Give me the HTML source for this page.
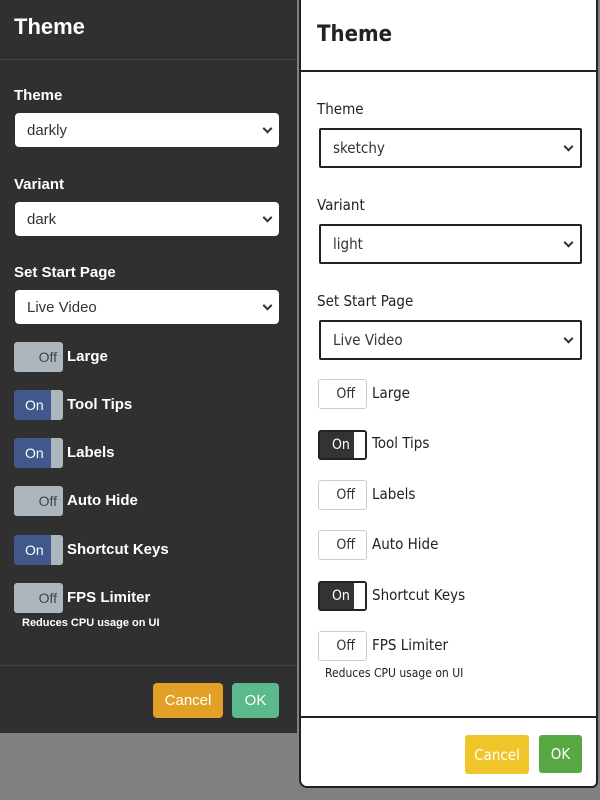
<!DOCTYPE html>
<html><head><style>
*{box-sizing:border-box;margin:0;padding:0}
body{width:600px;height:800px;background:#808080;position:relative;overflow:hidden;font-family:"Liberation Sans",sans-serif}
.a{position:absolute}
#L{left:0;top:0;width:297px;height:733px;background:#303030;color:#fff}
#R{left:299px;top:-2px;width:299px;height:790px;background:#fff;border:2px solid #222;border-radius:0 0 6px 8px;color:#222;font-family:"Liberation Sans Narrow","DejaVu Sans Condensed",sans-serif}
.lbl{font-size:15px;font-weight:bold}
.sel{border-radius:4px;background:#fff;color:#333;font-size:15px;padding-left:12px;display:flex;align-items:center}
.chev{position:absolute;right:8px;top:50%;width:7px;height:7px;border-right:2px solid #333;border-bottom:2px solid #333;transform:translateY(-70%) rotate(45deg)}
.tg{width:49px;height:30px;border-radius:3px;font-size:14px;display:flex;align-items:center}
.off{background:#adb5bd;color:#444;justify-content:flex-end;padding-right:6px}
.on{background:#41598a;color:#fff;padding-left:11px}
.on::after{content:"";position:absolute;right:0;top:0;width:12px;height:30px;background:#adb5bd;border-radius:0 3px 3px 0}
.rtg{width:49px;height:30px;border:1px solid #ccc;border-radius:3px;font-size:14px;display:flex;align-items:center}
.roff{justify-content:flex-end;padding-right:11px;color:#333}
.ron{background:#333;color:#fff;padding-left:12px;border:2px solid #222}
.ron::after{content:"";position:absolute;right:0;top:0;width:11px;height:26px;background:#fff}
.rl{font-size:15px}
</style></head><body>
<div id="L" class="a">
<div class="a" style="left:14px;top:14px;font-size:22px;font-weight:bold">Theme</div>
<div class="a" style="left:0;top:59px;width:297px;height:1px;background:#444"></div>
<div class="a lbl" style="left:14px;top:87px">Theme</div>
<div class="a sel" style="left:15px;top:113px;width:264px;height:34px">darkly<span class="chev"></span></div>
<div class="a lbl" style="left:14px;top:176px">Variant</div>
<div class="a sel" style="left:15px;top:202px;width:264px;height:34px">dark<span class="chev"></span></div>
<div class="a lbl" style="left:14px;top:264px">Set Start Page</div>
<div class="a sel" style="left:15px;top:290px;width:264px;height:34px">Live Video<span class="chev"></span></div>
<div class="a tg off" style="left:14px;top:342px">Off</div><div class="a lbl" style="left:67px;top:348px">Large</div>
<div class="a tg on" style="left:14px;top:390px">On</div><div class="a lbl" style="left:67px;top:396px">Tool Tips</div>
<div class="a tg on" style="left:14px;top:438px">On</div><div class="a lbl" style="left:67px;top:444px">Labels</div>
<div class="a tg off" style="left:14px;top:486px">Off</div><div class="a lbl" style="left:67px;top:492px">Auto Hide</div>
<div class="a tg on" style="left:14px;top:535px">On</div><div class="a lbl" style="left:67px;top:541px">Shortcut Keys</div>
<div class="a tg off" style="left:14px;top:583px">Off</div><div class="a lbl" style="left:67px;top:589px">FPS Limiter</div>
<div class="a" style="left:22px;top:617px;font-size:11px;font-weight:bold">Reduces CPU usage on UI</div>
<div class="a" style="left:0;top:665px;width:297px;height:1px;background:#444"></div>
<div class="a" style="left:153px;top:683px;width:70px;height:35px;background:#e2a026;border-radius:4px;font-size:15px;display:flex;align-items:center;justify-content:center">Cancel</div>
<div class="a" style="left:232px;top:683px;width:47px;height:35px;background:#5bb98b;border-radius:4px;font-size:15px;display:flex;align-items:center;justify-content:center">OK</div>
</div>
<div id="R" class="a">
<div class="a" style="left:16px;top:22px;font-size:22px;font-weight:bold">Theme</div>
<div class="a" style="left:0;top:70px;width:295px;height:2px;background:#222"></div>
<div class="a rl" style="left:16px;top:100px">Theme</div>
<div class="a sel" style="left:18px;top:128px;width:263px;height:40px;border:2px solid #222;border-radius:2px;font-size:15px">sketchy<span class="chev"></span></div>
<div class="a rl" style="left:16px;top:196px">Variant</div>
<div class="a sel" style="left:18px;top:224px;width:263px;height:40px;border:2px solid #222;border-radius:2px;font-size:15px">light<span class="chev"></span></div>
<div class="a rl" style="left:16px;top:292px">Set Start Page</div>
<div class="a sel" style="left:18px;top:320px;width:263px;height:40px;border:2px solid #222;border-radius:2px;font-size:15px">Live Video<span class="chev"></span></div>
<div class="a rtg roff" style="left:17px;top:379px">Off</div><div class="a rl" style="left:71px;top:384px">Large</div>
<div class="a rtg ron" style="left:17px;top:430px">On</div><div class="a rl" style="left:71px;top:434px">Tool Tips</div>
<div class="a rtg roff" style="left:17px;top:480px">Off</div><div class="a rl" style="left:71px;top:485px">Labels</div>
<div class="a rtg roff" style="left:17px;top:530px">Off</div><div class="a rl" style="left:71px;top:535px">Auto Hide</div>
<div class="a rtg ron" style="left:17px;top:581px">On</div><div class="a rl" style="left:71px;top:586px">Shortcut Keys</div>
<div class="a rtg roff" style="left:17px;top:631px">Off</div><div class="a rl" style="left:71px;top:636px">FPS Limiter</div>
<div class="a" style="left:24px;top:666px;font-size:12px">Reduces CPU usage on UI</div>
<div class="a" style="left:0;top:716px;width:295px;height:2px;background:#222"></div>
<div class="a" style="left:164px;top:735px;width:64px;height:39px;background:#f0c52a;color:#fff;border-radius:3px;font-size:15px;display:flex;align-items:center;justify-content:center">Cancel</div>
<div class="a" style="left:238px;top:735px;width:43px;height:38px;background:#57a743;color:#fff;border-radius:3px;font-size:15px;display:flex;align-items:center;justify-content:center">OK</div>
</div>
</body></html>
